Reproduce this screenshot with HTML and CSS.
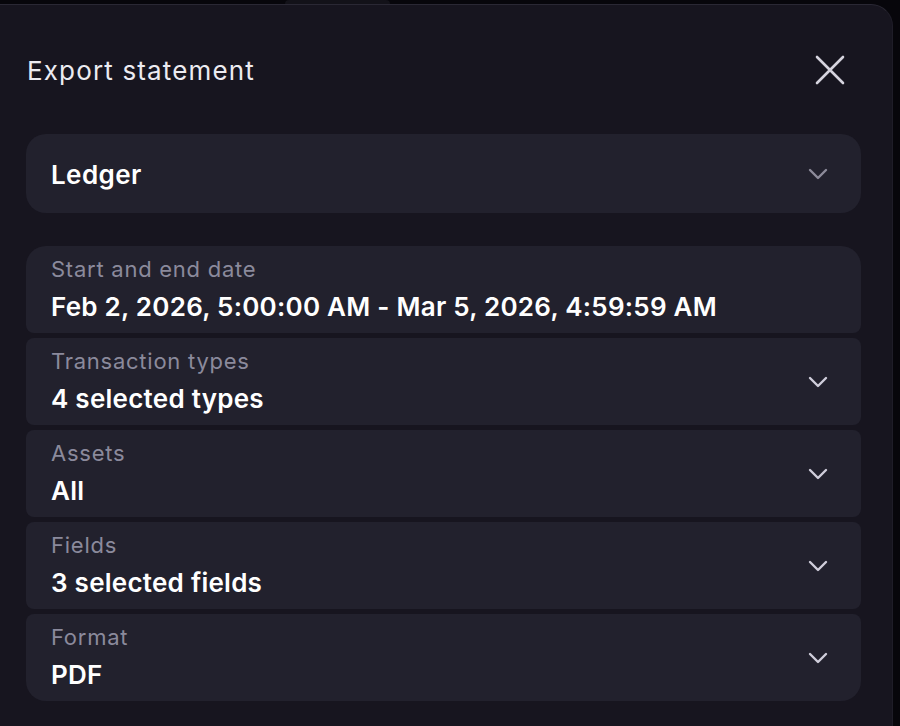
FILE: index.html
```html
<!DOCTYPE html>
<html lang="en">
<head>
<meta charset="utf-8">
<title>Export statement</title>
<link rel="stylesheet" href="styles.css">
</head>
<body>

	<div class="backdrop">
		<div class="backdrop_tab"></div>
	</div>

	<div class="modal">
		<div class="modal_head">
			<h2 class="modal_title">Export statement</h2>
			<button class="close_btn" aria-label="Close">
				<svg width="30" height="30" viewBox="0 0 30 30"><path d="M2 2 L28 28 M28 2 L2 28" stroke="#d6d4de" stroke-width="2.6" stroke-linecap="round" fill="none"/></svg>
			</button>
		</div>

		<div class="select">
			<span class="select_value">Ledger</span>
			<svg class="chevron" width="20" height="12" viewBox="0 0 20 12"><path d="M2 2 L10 10 L18 2" stroke="#8d8b9a" stroke-width="2.4" stroke-linecap="round" stroke-linejoin="round" fill="none"/></svg>
		</div>

		<div class="field_group">
			<div class="field">
				<div class="field_text">
					<div class="field_label">Start and end date</div>
					<div class="field_value">Feb 2, 2026, 5:00:00 AM - Mar 5, 2026, 4:59:59 AM</div>
				</div>
			</div>
			<div class="field">
				<div class="field_text">
					<div class="field_label">Transaction types</div>
					<div class="field_value">4 selected types</div>
				</div>
				<svg class="chevron" width="20" height="12" viewBox="0 0 20 12"><path d="M2 2 L10 10 L18 2" stroke="#d0cedb" stroke-width="2.4" stroke-linecap="round" stroke-linejoin="round" fill="none"/></svg>
			</div>
			<div class="field">
				<div class="field_text">
					<div class="field_label">Assets</div>
					<div class="field_value">All</div>
				</div>
				<svg class="chevron" width="20" height="12" viewBox="0 0 20 12"><path d="M2 2 L10 10 L18 2" stroke="#d0cedb" stroke-width="2.4" stroke-linecap="round" stroke-linejoin="round" fill="none"/></svg>
			</div>
			<div class="field">
				<div class="field_text">
					<div class="field_label">Fields</div>
					<div class="field_value">3 selected fields</div>
				</div>
				<svg class="chevron" width="20" height="12" viewBox="0 0 20 12"><path d="M2 2 L10 10 L18 2" stroke="#d0cedb" stroke-width="2.4" stroke-linecap="round" stroke-linejoin="round" fill="none"/></svg>
			</div>
			<div class="field">
				<div class="field_text">
					<div class="field_label">Format</div>
					<div class="field_value">PDF</div>
				</div>
				<svg class="chevron" width="20" height="12" viewBox="0 0 20 12"><path d="M2 2 L10 10 L18 2" stroke="#d0cedb" stroke-width="2.4" stroke-linecap="round" stroke-linejoin="round" fill="none"/></svg>
			</div>
		</div>
	</div>

</body>
</html>
```

FILE: styles.css
```css
html, body {
	margin: 0;
	height: 100%;
	background: #07060b;
	overflow: hidden;
}

body {
	font-family: Inter, "Noto Sans", sans-serif;
	color: #ffffff;
}

/* page behind the dialog */
.backdrop {
	height: 4px;
}
.backdrop_tab {
	margin-left: 285px;
	width: 105px;
	height: 4px;
	background: #131219;
	border-radius: 6px 6px 0 0;
}

.modal {
	width: 893px;
	height: 722px;
	box-sizing: border-box;
	padding: 0 31px 0 26px;
	background: #17151f;
	border-top: 1px solid #2a2834;
	border-right: 1px solid #1f1d28;
	border-radius: 0 22px 0 0;
}

.modal_head {
	height: 129px;
	display: flex;
	align-items: center;
	justify-content: space-between;
}

.modal_title {
	margin: 2px 0 0 1px;
	font-size: 26px;
	font-weight: 400;
	color: #ecebf1;
	letter-spacing: 1.15px;
}

.close_btn {
	background: none;
	border: 0;
	padding: 0;
	margin-right: 16px;
	width: 30px;
	height: 30px;
	cursor: pointer;
}
.close_btn svg {display: block;}

.select {
	height: 79px;
	box-sizing: border-box;
	padding: 0 33px 0 25px;
	display: flex;
	align-items: center;
	justify-content: space-between;
	background: #22212d;
	border-radius: 20px;
	margin-bottom: 33px;
}

.select_value {
	font-size: 26px;
	font-weight: 600;
	letter-spacing: 0.4px;
	padding-top: 2px;
}

.chevron {display: block;}

.field_group {
	display: flex;
	flex-direction: column;
	gap: 5px;
}

.field {
	height: 87px;
	box-sizing: border-box;
	padding: 0 33px 0 25px;
	display: flex;
	align-items: center;
	justify-content: space-between;
	background: #22212d;
	border-radius: 8px;
}
.field:first-child {border-radius: 20px 20px 8px 8px;}
.field:last-child {border-radius: 8px 8px 20px 20px;}

.field_text {
	align-self: flex-start;
	padding-top: 10px;
}

.field_label {
	font-size: 22px;
	line-height: 26px;
	color: #8b8a9c;
	letter-spacing: 0.75px;
}

.field_value {
	margin-top: 7px;
	font-size: 26px;
	line-height: 36px;
	font-weight: 600;
	color: #ffffff;
	letter-spacing: 0.25px;
}
```
